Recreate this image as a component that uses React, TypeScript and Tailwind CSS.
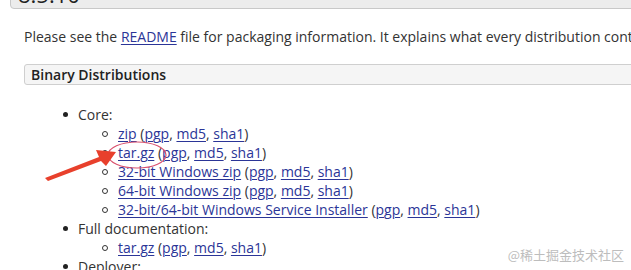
const LINK = 'text-[#2b3597] underline underline-offset-2 decoration-1';

type Sub = { label: string };

const CORE: Sub[] = [
  { label: 'zip' },
  { label: 'tar.gz' },
  { label: '32-bit Windows zip' },
  { label: '64-bit Windows zip' },
  { label: '32-bit/64-bit Windows Service Installer' },
];

function Sigs() {
  return (
    <span>
      {' ('}
      <a className={LINK}>pgp</a>, <a className={LINK}>md5</a>, <a className={LINK}>sha1</a>)
    </span>
  );
}

function SubItem({ label }: Sub) {
  return (
    <li className="flex items-center h-[19px]">
      <span className="w-[55px] flex justify-end pr-[10px]">
        <span className="block h-[6px] w-[6px] rounded-full border border-[#333]" />
      </span>
      <span>
        <a className={LINK}>{label}</a>
        <Sigs />
      </span>
    </li>
  );
}

function TopItem({ label, children }: { label: string; children?: React.ReactNode }) {
  return (
    <li>
      <div className="flex items-center h-[19px]">
        <span className="w-[15px] flex">
          <span className="block h-[5px] w-[5px] rounded-full bg-[#222]" />
        </span>
        <span>{label}</span>
      </div>
      {children && <ul>{children}</ul>}
    </li>
  );
}

export default function App() {
  return (
    <div
      className="relative w-[631px] h-[270px] overflow-hidden bg-white text-[#333] text-[14px]"
      style={{ fontFamily: '"Open Sans", "Noto Sans", sans-serif' }}
    >
      <div className="w-[1000px]">
        <div className="ml-[10px] -mt-[22px] h-[31px] rounded-[4px] border border-[#c8c8c8] bg-[#ececec] pl-[7px] text-[22px] leading-[31px] text-[#222]">
          8.5.10
        </div>
        <p className="ml-[24px] mt-[18px] leading-[20px] whitespace-nowrap">
          Please see the <a className={LINK}>README</a> file for packaging information. It explains what
          every distribution contains.
        </p>
        <div className="ml-[24px] mt-[17px] h-[21px] rounded-[3px] border border-[#cfcfcf] bg-[#f5f5f5] pl-[6px] font-semibold leading-[19px] text-[#222]">
          Binary Distributions
        </div>
        <ul className="ml-[63px] mt-[20px] leading-[19px]">
          <TopItem label="Core:">
            {CORE.map((c) => (
              <SubItem key={c.label} {...c} />
            ))}
          </TopItem>
          <TopItem label="Full documentation:">
            <SubItem label="tar.gz" />
          </TopItem>
          <TopItem label="Deployer:" />
        </ul>
      </div>

      {/* annotation: ellipse + arrow */}
      <svg className="absolute left-0 top-0" width="631" height="270">
        <ellipse cx="137" cy="155" rx="29" ry="13" fill="none" stroke="#d9506e" strokeWidth="1.2" />
        <polygon
          points="45,178 99,157 96,150 116,152 106,166 101,161 48,181"
          fill="#e8402c"
        />
      </svg>

      <div
        className="absolute right-[7px] bottom-[6px] text-[13px] text-[#bdbdbd]"
        style={{ fontFamily: '"Noto Sans CJK SC", sans-serif' }}
      >
        @稀土掘金技术社区
      </div>
    </div>
  );
}
